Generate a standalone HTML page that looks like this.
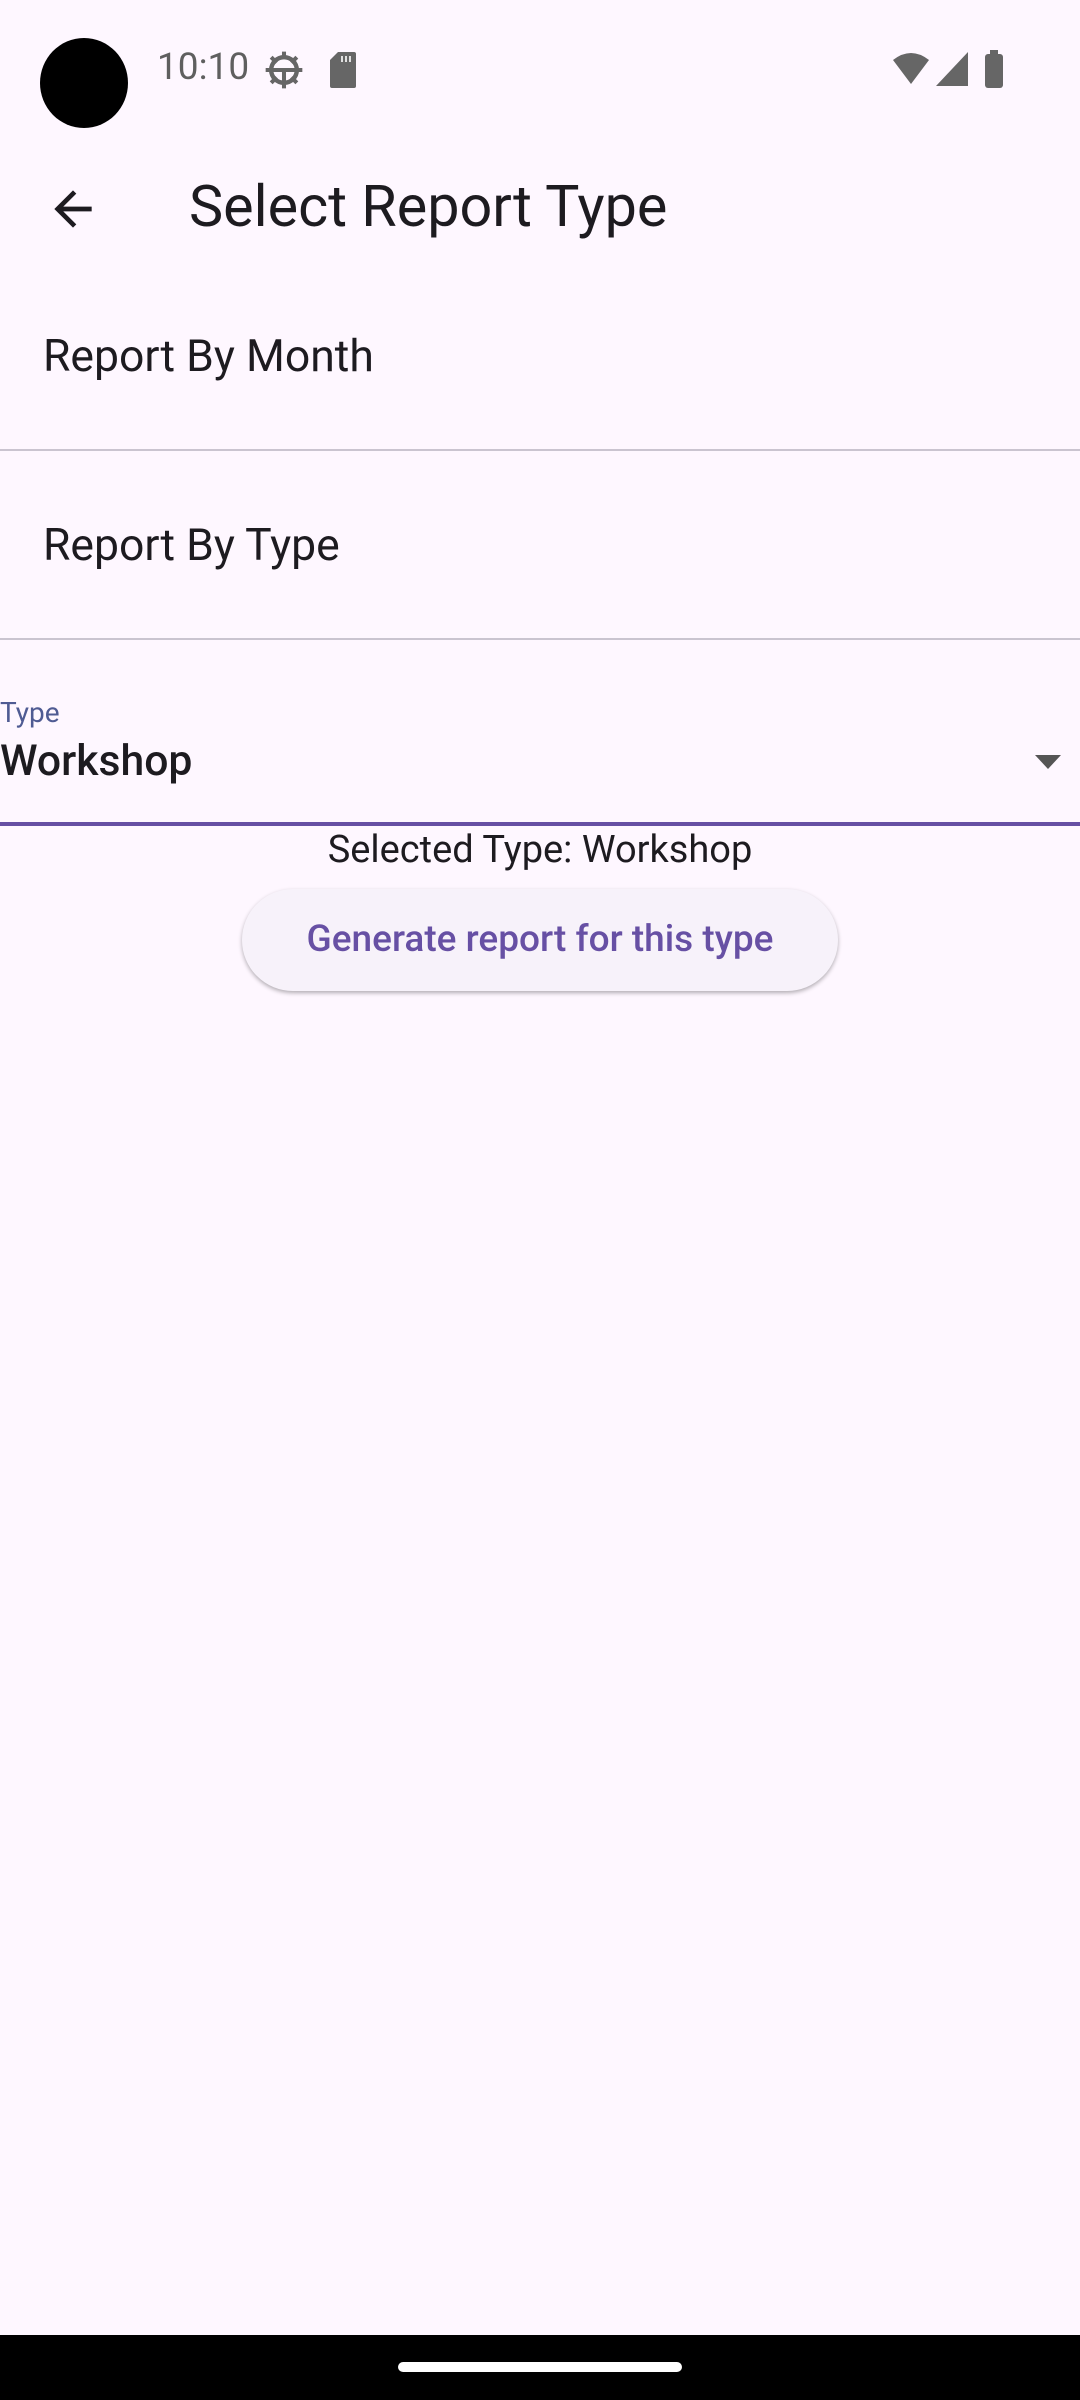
<!DOCTYPE html>
<html><head><meta charset="utf-8"><style>
*{margin:0;padding:0;box-sizing:border-box}
body{width:1080px;height:2400px;background:#fef7ff;font-family:"Roboto","Liberation Sans",sans-serif;position:relative;overflow:hidden;color:#1d1b20}
.a{position:absolute;white-space:nowrap}
</style></head><body>
<div class="a" style="left:40px;top:38px;width:88px;height:90px;border-radius:50%;background:#000"></div>
<div class="a" style="left:157px;top:48px;font-size:37px;color:#5f5f5f;line-height:40px">10:10</div>
<svg class="a" style="left:262px;top:48px" width="44" height="44" viewBox="0 0 24 24"><circle cx="12" cy="12" r="7" fill="none" stroke="#666" stroke-width="2.4"/><path d="M12 2v4M12 18v4M2 12h4M18 12h4M5 5l3 3M19 5l-3 3M5 19l3-3M19 19l-3-3M6 12h12M12 12v7" stroke="#666" stroke-width="2.2"/></svg>
<svg class="a" style="left:330px;top:52px" width="26" height="36" viewBox="0 0 13 18"><path d="M4 0h8a1 1 0 0 1 1 1v16a1 1 0 0 1-1 1H1a1 1 0 0 1-1-1V4z" fill="#666"/><path d="M6 2v3M8 2v3M10 2v3" stroke="#fff" stroke-width=".8"/></svg>
<svg class="a" style="left:893px;top:52px" width="36" height="32" viewBox="0 0 36 32"><path d="M0 8Q18-6 36 8L18 32z" fill="#666"/></svg>
<svg class="a" style="left:936px;top:52px" width="32" height="34" viewBox="0 0 32 34"><path d="M32 0V34H0z" fill="#666"/></svg>
<div class="a" style="left:985px;top:54px;width:18px;height:34px;background:#666;border-radius:3px"></div>
<div class="a" style="left:990px;top:50px;width:8px;height:6px;background:#666"></div>
<svg class="a" style="left:45px;top:181px" width="56" height="56" viewBox="0 0 24 24"><path d="M20 11H7.83l5.59-5.59L12 4l-8 8 8 8 1.41-1.41L7.83 13H20v-2z" fill="#1d1b20"/></svg>
<div class="a" style="left:189px;top:175px;font-size:57.5px;line-height:66px">Select Report Type</div>
<div class="a" style="left:43px;top:329px;font-size:44.5px;line-height:54px">Report By Month</div>
<div class="a" style="left:0;top:449px;width:1080px;height:2px;background:#cac4d0"></div>
<div class="a" style="left:43px;top:518px;font-size:44.5px;line-height:54px">Report By Type</div>
<div class="a" style="left:0;top:638px;width:1080px;height:2px;background:#cac4d0"></div>
<div class="a" style="left:0;top:695px;font-size:28px;line-height:36px;color:#4f5b93">Type</div>
<div class="a" style="left:0;top:734px;font-size:42.7px;line-height:54px;font-weight:500">Workshop</div>
<svg class="a" style="left:1035px;top:755px" width="26" height="14" viewBox="0 0 26 14"><path d="M0 0h26L13 14z" fill="#555"/></svg>
<div class="a" style="left:0;top:822px;width:1080px;height:4px;background:#6750a4"></div>
<div class="a" style="left:0;top:827px;width:1080px;text-align:center;font-size:38px;line-height:46px">Selected Type: Workshop</div>
<div class="a" style="left:242px;top:889px;width:596px;height:102px;border-radius:51px;background:#f7f2fa;box-shadow:0 2px 4px rgba(0,0,0,.3);text-align:center;line-height:102px;color:#6750a4;font-size:37px;font-weight:500">Generate report for this type</div>
<div class="a" style="left:0;top:2335px;width:1080px;height:65px;background:#000"></div>
<div class="a" style="left:398px;top:2362px;width:284px;height:10px;border-radius:5px;background:#fff"></div>
</body></html>
